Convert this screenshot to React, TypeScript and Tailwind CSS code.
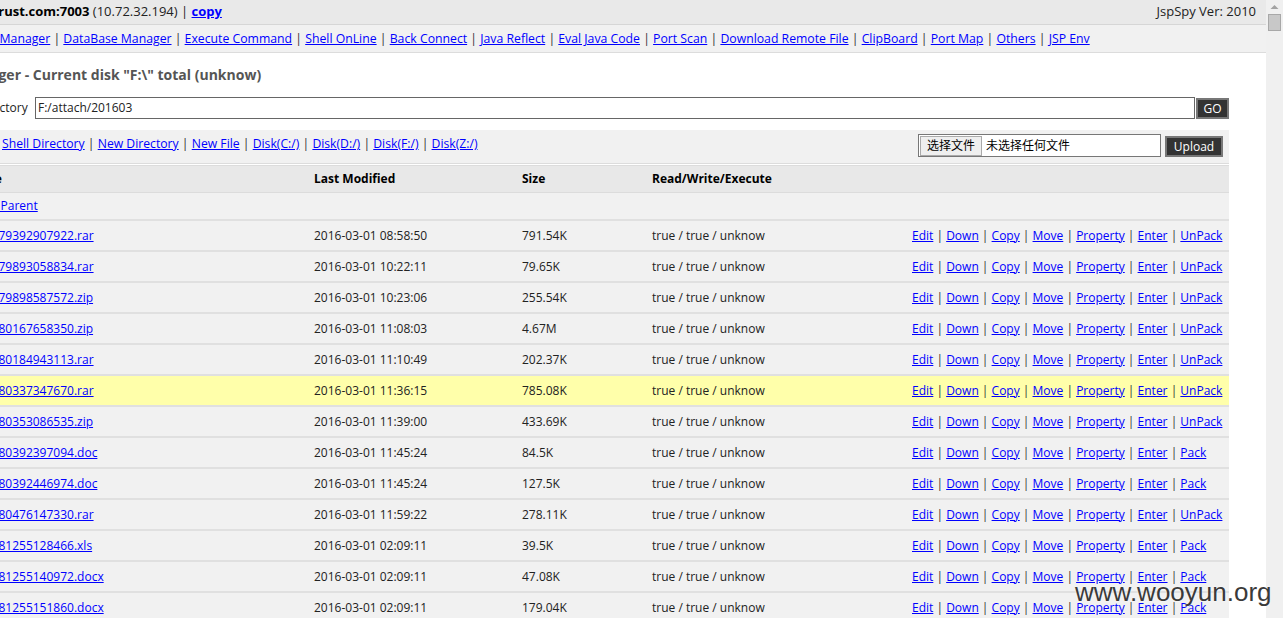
import React from 'react'

const font = { fontFamily: '"Open Sans", "Noto Sans CJK SC", sans-serif' }

const navLinks = ['File Manager', 'DataBase Manager', 'Execute Command', 'Shell OnLine', 'Back Connect', 'Java Reflect', 'Eval Java Code', 'Port Scan', 'Download Remote File', 'ClipBoard', 'Port Map', 'Others', 'JSP Env']
const dirLinks = ['Shell Directory', 'New Directory', 'New File', 'Disk(C:/)', 'Disk(D:/)', 'Disk(F:/)', 'Disk(Z:/)']

const files = [
  ['145679392907922.rar', '2016-03-01 08:58:50', '791.54K', 'UnPack'],
  ['145679893058834.rar', '2016-03-01 10:22:11', '79.65K', 'UnPack'],
  ['145679898587572.zip', '2016-03-01 10:23:06', '255.54K', 'UnPack'],
  ['145680167658350.zip', '2016-03-01 11:08:03', '4.67M', 'UnPack'],
  ['145680184943113.rar', '2016-03-01 11:10:49', '202.37K', 'UnPack'],
  ['145680337347670.rar', '2016-03-01 11:36:15', '785.08K', 'UnPack'],
  ['145680353086535.zip', '2016-03-01 11:39:00', '433.69K', 'UnPack'],
  ['145680392397094.doc', '2016-03-01 11:45:24', '84.5K', 'Pack'],
  ['145680392446974.doc', '2016-03-01 11:45:24', '127.5K', 'Pack'],
  ['145680476147330.rar', '2016-03-01 11:59:22', '278.11K', 'UnPack'],
  ['145681255128466.xls', '2016-03-01 02:09:11', '39.5K', 'Pack'],
  ['145681255140972.docx', '2016-03-01 02:09:11', '47.08K', 'Pack'],
  ['145681255151860.docx', '2016-03-01 02:09:11', '179.04K', 'Pack'],
]

function Links({ items }: { items: string[] }) {
  return (
    <span className="whitespace-nowrap">
      {items.map((t, i) => (
        <span key={t + i}>
          {i > 0 && <span className="text-[#333]"> | </span>}
          <a className="text-[#0000ff] underline">{t}</a>
        </span>
      ))}
    </span>
  )
}

export default function App() {
  return (
    <div className="relative flex h-[618px] w-[1283px] overflow-hidden bg-white text-[12px] text-[#222]" style={font}>
      <div className="w-[1266px] overflow-hidden">
        {/* top bar */}
        <div className="flex h-[25px] items-center justify-between border-b border-[#d6d6d6] bg-[#e9e9e9] pr-[10px] text-[13px]">
          <div className="-ml-[52px] whitespace-nowrap">
            <b className="text-black">www.xtrust.com:7003</b> (10.72.32.194) | <a className="font-bold text-[#0000ff] underline">copy</a>
          </div>
          <span>JspSpy Ver: 2010</span>
        </div>
        <div className="flex h-[28px] items-center border-b border-[#dcdcdc] bg-[#f1f1f1] pt-[1px] text-[12.25px]">
          <div className="-ml-[23px]"><Links items={navLinks} /></div>
        </div>

        <div className="w-[1229px]">
          <h2 className="-ml-[69px] mt-[11px] whitespace-nowrap text-[14px] font-bold text-[#555]">File Manager - Current disk "F:\" total (unknow)</h2>

          <div className="mt-[12px] flex h-[22px] items-center">
            <span className="-ml-[70px] w-[105px] shrink-0 whitespace-nowrap">Current Directory</span>
            <div className="flex h-[22px] flex-1 items-center border border-[#666] px-[2px]">F:/attach/201603</div>
            <button className="ml-[1px] h-[21px] w-[33px] border-2 border-[#777] bg-[#333] text-[12px] text-white">GO</button>
          </div>

          <div className="mt-[11px] flex h-[34px] items-start justify-between border-b border-[#dcdcdc] bg-[#f1f1f1] pl-[2px] pr-[6px] pt-[5px] text-[12.2px]">
            <Links items={dirLinks} />
            <div className="-mt-[1px] flex items-center gap-[4px] text-[12px]">
              <div className="flex h-[23px] w-[243px] items-center border border-[#777] bg-white pl-[1px]">
                <span className="flex h-[20px] items-center border border-[#aaa] bg-[#efefef] px-[6px] text-black">选择文件</span>
                <span className="ml-[4px] text-black">未选择任何文件</span>
              </div>
              <button className="mt-[2px] h-[21px] w-[58px] border-2 border-[#777] bg-[#333] text-[12px] text-white">Upload</button>
            </div>
          </div>

          <div className="mt-[1px] grid h-[28px] grid-cols-[314px_208px_130px_260px_1fr] items-center border-b border-t border-[#dcdcdc] bg-[#e8e8e8] font-bold text-black">
            <span className="-ml-[34px]">Name</span>
            <span>Last Modified</span>
            <span>Size</span>
            <span>Read/Write/Execute</span>
            <span />
          </div>
          <div className="flex h-[28px] items-center border-b-2 border-[#e0e0e0] bg-[#f1f1f1]">
            <a className="-ml-[30px] text-[#0000ff] underline">Goto Parent</a>
          </div>
          {files.map(([name, date, size, pack], i) => (
            <div key={name} className={`grid h-[31px] grid-cols-[314px_208px_130px_260px_1fr] items-center border-b-2 border-[#e0e0e0] ${i === 5 ? 'bg-[#ffffaa]' : 'bg-[#f1f1f1]'}`}>
              <a className="-ml-[29px] whitespace-nowrap text-[#0000ff] underline">{name}</a>
              <span>{date}</span>
              <span>{size}</span>
              <span>true / true / unknow</span>
              <Links items={['Edit', 'Down', 'Copy', 'Move', 'Property', 'Enter', pack]} />
            </div>
          ))}
        </div>
      </div>

      {/* scrollbar */}
      <div className="flex w-[17px] flex-col items-center bg-[#f0f0f0]">
        <svg width="9" height="6" viewBox="0 0 9 6" className="mt-[4px]"><path d="M0.5 5 L4.5 1 L8.5 5 Z" fill="#a3a3a3" /></svg>
        <div className="mt-[4px] h-[17px] w-[13px] border border-[#a8a8a8] bg-[#c8c8c8]" />
      </div>

      <div className="absolute left-[1075px] top-[573px] whitespace-nowrap text-[26px] text-[#3a3a3a]" style={{ fontFamily: '"Liberation Sans", Arial, sans-serif', textShadow: '0 0 2px #fff' }}>www.wooyun.org</div>
    </div>
  )
}
